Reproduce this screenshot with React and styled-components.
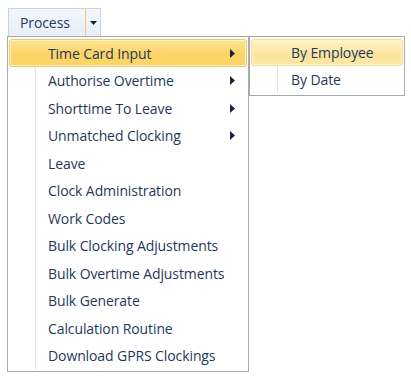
import React from "react";
import styled, { createGlobalStyle } from "styled-components";

const ITEMS = [
  { label: "Time Card Input", sub: true, active: true },
  { label: "Authorise Overtime", sub: true },
  { label: "Shorttime To Leave", sub: true },
  { label: "Unmatched Clocking", sub: true },
  { label: "Leave" },
  { label: "Clock Administration" },
  { label: "Work Codes" },
  { label: "Bulk Clocking Adjustments" },
  { label: "Bulk Overtime Adjustments" },
  { label: "Bulk Generate" },
  { label: "Calculation Routine" },
  { label: "Download GPRS Clockings" },
];

const SUB_ITEMS = [
  { label: "By Employee", active: true },
  { label: "By Date" },
];

const GlobalStyle = createGlobalStyle`
  html, body {
    margin: 0;
    padding: 0;
    background: #ffffff;
  }
  body {
    font-family: "Open Sans", "Noto Sans", sans-serif;
  }
`;

function Arrow() {
  return (
    <svg width="5" height="9" viewBox="0 0 5 9">
      <path d="M0 0 L5 4.5 L0 9 Z" fill="#15243a" />
    </svg>
  );
}

export default function App() {
  return (
    <Page>
      <GlobalStyle />
      <SplitButton>
        <ButtonLabel>Process</ButtonLabel>
        <ButtonDrop>
          <svg width="7" height="4" viewBox="0 0 7 4">
            <path d="M0 0 L7 0 L3.5 4 Z" fill="#15243a" />
          </svg>
        </ButtonDrop>
      </SplitButton>
      <MenuRow>
        <Menu>
          <IconColumn />
          {ITEMS.map((item) => (
            <Item key={item.label} $active={item.active}>
              <ItemText>{item.label}</ItemText>
              {item.sub && (
                <ArrowSlot>
                  <Arrow />
                </ArrowSlot>
              )}
            </Item>
          ))}
        </Menu>
        <SubMenu>
          <IconColumn />
          {SUB_ITEMS.map((item) => (
            <SubItem key={item.label} $active={item.active}>
              <ItemText>{item.label}</ItemText>
            </SubItem>
          ))}
        </SubMenu>
      </MenuRow>
    </Page>
  );
}

const Page = styled.div`
  padding: 8px 0 0 7px;
  width: 411px;
  height: 376px;
  box-sizing: border-box;
`;

const SplitButton = styled.div`
  display: flex;
  width: 93px;
  height: 28px;
  box-sizing: border-box;
  border: 1px solid #c5d3e4;
  border-bottom: none;
  background: linear-gradient(#f3f7fc, #e6eef8);
  margin-left: 1px;
`;

const ButtonLabel = styled.div`
  width: 77px;
  display: flex;
  align-items: center;
  padding-left: 11px;
  box-sizing: border-box;
  font-size: 14px;
  letter-spacing: -0.1px;
  color: #1e395b;
  border-right: 1px solid #f5c963;
`;

const ButtonDrop = styled.div`
  flex: 1;
  display: flex;
  align-items: center;
  justify-content: center;
  padding-top: 1px;
`;

const MenuRow = styled.div`
  display: flex;
  align-items: flex-start;
`;

const Menu = styled.div`
  position: relative;
  width: 242px;
  height: 336px;
  box-sizing: border-box;
  border: 1px solid #a7abb0;
  background: #ffffff;
  padding: 2px 1px 2px 1px;
`;

const SubMenu = styled.div`
  position: relative;
  width: 156px;
  height: 60px;
  box-sizing: border-box;
  border: 1px solid #a7abb0;
  background: #ffffff;
  padding: 2px 1px;
`;

const IconColumn = styled.div`
  position: absolute;
  left: 27px;
  top: 2px;
  bottom: 2px;
  width: 1px;
  background: #e2e3e3;
  border-right: 1px solid #ffffff;
`;

const Item = styled.div`
  position: relative;
  display: flex;
  align-items: center;
  height: ${(p) => (p.$active ? "28px" : "27.5px")};
  box-sizing: border-box;
  padding-left: 38px;
  padding-right: 11px;
  font-size: 14px;
  color: #1e395b;
  border: 1px solid ${(p) => (p.$active ? "#f2c762" : "transparent")};
  border-radius: 3px;
  background: ${(p) =>
    p.$active ? "linear-gradient(#fde697, #fcd466 50%, #fbd565)" : "transparent"};
  box-shadow: ${(p) => (p.$active ? "inset 0 0 0 1px #fff4c8" : "none")};
  z-index: 1;
`;

const SubItem = styled(Item)`
  padding-left: 39px;
  height: ${(p) => (p.$active ? "27px" : "27px")};
  background: ${(p) =>
    p.$active ? "linear-gradient(#fef3cb, #fbe49c 60%, #fbe8a6)" : "transparent"};
  border-color: ${(p) => (p.$active ? "#f4dc92" : "transparent")};
`;

const ItemText = styled.span`
  flex: 1;
  white-space: nowrap;
  letter-spacing: -0.1px;
`;

const ArrowSlot = styled.span`
  display: flex;
  align-items: center;
`;
